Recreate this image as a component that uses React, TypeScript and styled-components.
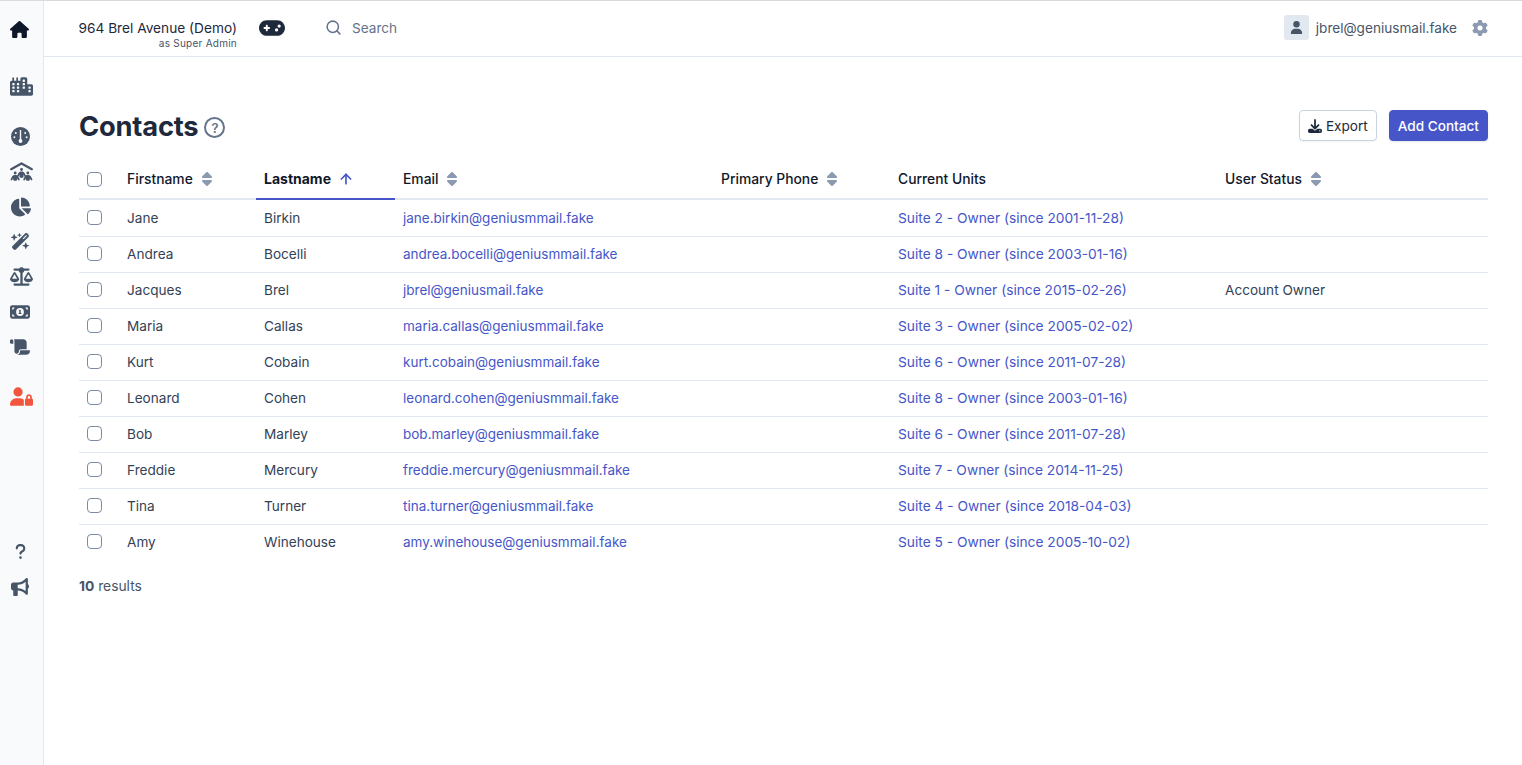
import styled, { createGlobalStyle } from 'styled-components';
import { FaChartPie } from 'react-icons/fa';
import {
    FaBullhorn,
    FaCity,
    FaDownload,
    FaGamepad,
    FaGear,
    FaHouse,
    FaMoneyBill1,
    FaPeopleRoof,
    FaQuestion,
    FaScaleBalanced,
    FaScroll,
    FaSort,
    FaUser,
    FaUserLock,
    FaWandMagicSparkles,
} from 'react-icons/fa6';
import { ArrowUp, Search } from 'lucide-react';

const contacts = [
    ['Jane', 'Birkin', 'jane.birkin@geniusmmail.fake', 'Suite 2 - Owner (since 2001-11-28)', ''],
    ['Andrea', 'Bocelli', 'andrea.bocelli@geniusmmail.fake', 'Suite 8 - Owner (since 2003-01-16)', ''],
    ['Jacques', 'Brel', 'jbrel@geniusmail.fake', 'Suite 1 - Owner (since 2015-02-26)', 'Account Owner'],
    ['Maria', 'Callas', 'maria.callas@geniusmmail.fake', 'Suite 3 - Owner (since 2005-02-02)', ''],
    ['Kurt', 'Cobain', 'kurt.cobain@geniusmmail.fake', 'Suite 6 - Owner (since 2011-07-28)', ''],
    ['Leonard', 'Cohen', 'leonard.cohen@geniusmmail.fake', 'Suite 8 - Owner (since 2003-01-16)', ''],
    ['Bob', 'Marley', 'bob.marley@geniusmmail.fake', 'Suite 6 - Owner (since 2011-07-28)', ''],
    ['Freddie', 'Mercury', 'freddie.mercury@geniusmmail.fake', 'Suite 7 - Owner (since 2014-11-25)', ''],
    ['Tina', 'Turner', 'tina.turner@geniusmmail.fake', 'Suite 4 - Owner (since 2018-04-03)', ''],
    ['Amy', 'Winehouse', 'amy.winehouse@geniusmmail.fake', 'Suite 5 - Owner (since 2005-10-02)', ''],
];

const GaugeIcon = () => (
    <svg width='19' height='19' viewBox='0 0 19 19'>
        <circle cx='9.5' cy='9.5' r='9.5' fill='currentColor' />
        <g fill='#f8fafc'>
            <rect x='8.8' y='3' width='1.4' height='10' />
            <circle cx='9.5' cy='14' r='1.9' />
            <circle cx='4.8' cy='6' r='1' />
            <circle cx='14.2' cy='6' r='1' />
            <circle cx='3.4' cy='10.2' r='1' />
            <circle cx='15.6' cy='10.2' r='1' />
        </g>
    </svg>
);

const App = () => {
    return (
        <Page>
            <GlobalStyle />
            <Sidebar>
                <NavItem $color='#0f172a'>
                    <FaHouse size={19} />
                </NavItem>
                <NavGroup $gap={22}>
                    <NavItem>
                        <FaCity size={23} />
                    </NavItem>
                </NavGroup>
                <NavGroup $gap={15}>
                    <NavItem $inset={1}>
                        <GaugeIcon />
                    </NavItem>
                    <NavItem>
                        <FaPeopleRoof size={23} />
                    </NavItem>
                    <NavItem $inset={1}>
                        <FaChartPie size={20} />
                    </NavItem>
                    <NavItem $inset={1}>
                        <FaWandMagicSparkles size={19} />
                    </NavItem>
                    <NavItem>
                        <FaScaleBalanced size={23} />
                    </NavItem>
                    <NavItem>
                        <FaMoneyBill1 size={20} />
                    </NavItem>
                    <NavItem>
                        <FaScroll size={20} />
                    </NavItem>
                </NavGroup>
                <NavGroup $gap={15}>
                    <NavItem $color='#f2553d'>
                        <FaUserLock size={23} />
                    </NavItem>
                </NavGroup>
                <NavGroup $gap={120}>
                    <NavItem $inset={2}>
                        <FaQuestion size={17} />
                    </NavItem>
                    <NavItem $inset={1}>
                        <FaBullhorn size={18} />
                    </NavItem>
                </NavGroup>
            </Sidebar>
            <Main>
                <Header>
                    <Building>
                        <BuildingName>964 Brel Avenue (Demo)</BuildingName>
                        <BuildingRole>as Super Admin</BuildingRole>
                    </Building>
                    <GameIcon>
                        <FaGamepad size={26} />
                    </GameIcon>
                    <SearchBox>
                        <Search size={17} strokeWidth={2.2} />
                        <span>Search</span>
                    </SearchBox>
                    <UserBox>
                        <Avatar>
                            <FaUser size={13} />
                        </Avatar>
                        <UserEmail>jbrel@geniusmail.fake</UserEmail>
                        <FaGear size={16} color='#8b9ab0' />
                    </UserBox>
                </Header>
                <Content>
                    <TitleRow>
                        <Title>Contacts</Title>
                        <HelpIcon>?</HelpIcon>
                        <Actions>
                            <ExportButton>
                                <FaDownload size={14} />
                                Export
                            </ExportButton>
                            <AddButton>Add Contact</AddButton>
                        </Actions>
                    </TitleRow>
                    <Table>
                        <colgroup>
                            <col width={40} />
                            <col width={137} />
                            <col width={139} />
                            <col width={318} />
                            <col width={177} />
                            <col width={327} />
                            <col width={271} />
                        </colgroup>
                        <thead>
                            <tr>
                                <Th>
                                    <Checkbox />
                                </Th>
                                <Th>
                                    Firstname
                                    <SortIcon />
                                </Th>
                                <Th $active>
                                    Lastname
                                    <ActiveSortIcon size={16} strokeWidth={2.5} />
                                </Th>
                                <Th>
                                    Email
                                    <SortIcon />
                                </Th>
                                <Th>
                                    Primary Phone
                                    <SortIcon />
                                </Th>
                                <Th>Current Units</Th>
                                <Th>
                                    User Status
                                    <SortIcon />
                                </Th>
                            </tr>
                        </thead>
                        <tbody>
                            {contacts.map(([first, last, email, unit, status]) => (
                                <tr key={email}>
                                    <Td>
                                        <Checkbox />
                                    </Td>
                                    <Td>{first}</Td>
                                    <Td>{last}</Td>
                                    <Td>
                                        <Link>{email}</Link>
                                    </Td>
                                    <Td />
                                    <Td>
                                        <Link $unit>{unit}</Link>
                                    </Td>
                                    <Td>{status}</Td>
                                </tr>
                            ))}
                        </tbody>
                    </Table>
                    <Results>
                        <strong>10</strong> results
                    </Results>
                </Content>
            </Main>
        </Page>
    );
};

const GlobalStyle = createGlobalStyle`
    html, body {
        margin: 0;
        height: 100%;
        background: #fff;
        overflow: hidden;
    }
    body, button {
        font-family: Inter, "Liberation Sans", sans-serif;
        font-size: 13.6px;
    }
    #root {
        height: 100%;
    }
`;

const Page = styled.div`
    display: flex;
    height: 765px;
    border-top: 1px solid #d8dadd;
    box-sizing: border-box;
`;

const Sidebar = styled.nav`
    display: flex;
    flex-direction: column;
    flex: none;
    box-sizing: border-box;
    width: 44px;
    padding: 11px 0 0 10px;
    background: #f8fafc;
    border-right: 1px solid #e2e8f0;
`;

const NavGroup = styled.div<{ $gap: number }>`
    display: flex;
    flex-direction: column;
    margin-top: ${(props) => props.$gap}px;
`;

const NavItem = styled.div<{ $color?: string; $inset?: number }>`
    display: flex;
    align-items: center;
    height: 35px;
    padding-left: ${(props) => props.$inset || 0}px;
    color: ${(props) => props.$color || '#475569'};
`;

const Main = styled.div`
    flex: 1;
    min-width: 0;
`;

const Header = styled.header`
    display: flex;
    align-items: center;
    box-sizing: border-box;
    height: 56px;
    padding: 0 34px 2px 35px;
    border-bottom: 1px solid #e2e8f0;
`;

const Building = styled.div`
    display: flex;
    flex-direction: column;
    align-items: flex-end;
    flex: none;
    width: 158px;
    margin-top: 14px;
`;

const BuildingName = styled.div`
    font-size: 13.7px;
    line-height: 17px;
    white-space: nowrap;
    color: #1e293b;
`;

const BuildingRole = styled.div`
    font-size: 10px;
    line-height: 12px;
    letter-spacing: 0.25px;
    color: #475569;
`;

const GameIcon = styled.div`
    display: flex;
    margin-left: 22px;
    color: #1e293b;
`;

const SearchBox = styled.div`
    display: flex;
    align-items: center;
    gap: 10px;
    margin-left: 40px;
    color: #64748b;
`;

const UserBox = styled.div`
    display: flex;
    align-items: center;
    margin-left: auto;
`;

const Avatar = styled.div`
    display: flex;
    align-items: center;
    justify-content: center;
    width: 25px;
    height: 25px;
    border-radius: 3px;
    background: #e2e8f0;
    color: #475569;
`;

const UserEmail = styled.span`
    margin: 0 15px 0 7px;
    color: #475569;
`;

const Content = styled.main`
    padding: 53px 34px 0 35px;
`;

const TitleRow = styled.div`
    display: flex;
    align-items: flex-start;
    height: 34px;
`;

const Title = styled.h1`
    margin: 0;
    font-size: 27.3px;
    line-height: 34px;
    font-weight: 700;
    letter-spacing: -0.2px;
    color: #1e293b;
`;

const HelpIcon = styled.span`
    display: flex;
    align-items: center;
    justify-content: center;
    box-sizing: border-box;
    width: 21px;
    height: 21px;
    margin: 7px 0 0 6px;
    border: 2px solid #64748b;
    border-radius: 50%;
    font-size: 13px;
    font-weight: 600;
    color: #64748b;
`;

const Actions = styled.div`
    display: flex;
    gap: 12px;
    margin-left: auto;
`;

const ExportButton = styled.button`
    display: flex;
    align-items: center;
    gap: 4px;
    height: 31px;
    padding: 0 8px;
    background: #fff;
    border: 1px solid #cbd5e1;
    border-radius: 4px;
    color: #1e293b;
    box-shadow: 0 1px 2px rgba(0, 0, 0, 0.05);
`;

const AddButton = styled.button`
    height: 31px;
    padding: 0 8px;
    background: #4656c9;
    border: 1px solid #4656c9;
    border-radius: 4px;
    font-weight: 500;
    color: #fff;
    box-shadow: 0 1px 2px rgba(0, 0, 0, 0.1);
`;

const Table = styled.table`
    width: 1409px;
    margin-top: 16px;
    border-collapse: separate;
    border-spacing: 0;
    table-layout: fixed;
`;

const Th = styled.th<{ $active?: boolean }>`
    height: 40px;
    padding: 0 8px ${(props) => (props.$active ? '2px' : '0')};
    box-sizing: border-box;
    text-align: left;
    font-size: ${(props) => (props.$active ? '14px' : '13.85px')};
    font-weight: ${(props) => (props.$active ? 700 : 500)};
    color: #0f172a;
    white-space: nowrap;
    border-bottom: 2px solid ${(props) => (props.$active ? '#4656c9' : '#e2e8f0')};
`;

const Td = styled.td`
    height: 36px;
    padding: 0 8px 1px;
    box-sizing: border-box;
    color: #334155;
    white-space: nowrap;
    border-bottom: 1px solid #e2e8f0;

    input {
        margin-bottom: 1px;
    }

    tr:first-child > & {
        height: 37px;
    }

    tr:last-child > & {
        padding-bottom: 2px;
        border-bottom: none;
    }
`;

const Checkbox = styled.input.attrs({ type: 'checkbox' })`
    appearance: none;
    display: block;
    width: 15px;
    height: 15px;
    margin: 0;
    background: #fff;
    border: 1px solid #7c8ba1;
    border-radius: 4px;
`;

const SortIcon = styled(FaSort)`
    margin: -4px 0 -4px 6px;
    vertical-align: 1px;
    font-size: 16px;
    color: #8b9ab0;
`;

const ActiveSortIcon = styled(ArrowUp)`
    margin: -4px 0 -4px 7px;
    vertical-align: 1px;
    color: #4656c9;
`;

const Link = styled.a<{ $unit?: boolean }>`
    color: #4656c9;
    font-size: ${(props) => (props.$unit ? '13.75px' : '13.5px')};
`;

const Results = styled.div`
    margin-top: 17px;
    font-size: 13.8px;
    line-height: 17px;
    color: #475569;

    strong {
        font-weight: 700;
    }
`;

export default App;
